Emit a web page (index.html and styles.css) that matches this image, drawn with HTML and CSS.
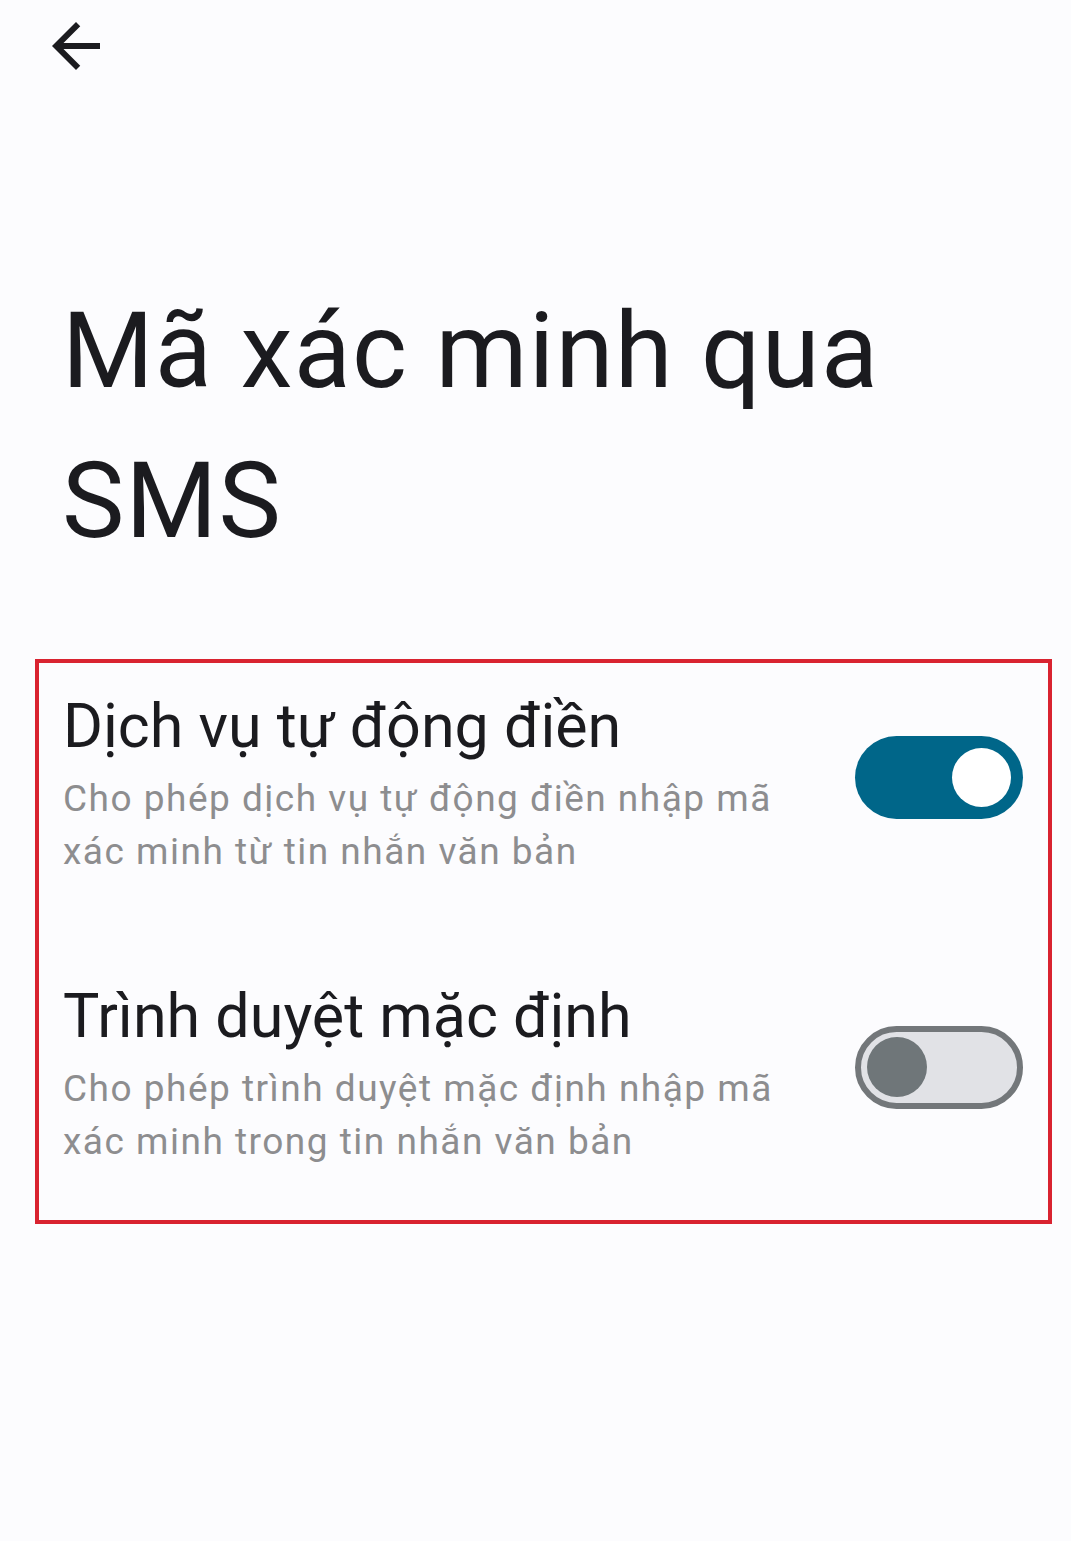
FILE: index.html
```html
<!DOCTYPE html>
<html lang="vi">

<head>
    <meta charset="UTF-8">
    <meta name="viewport" content="width=device-width, initial-scale=1.0">
    <title>Mã xác minh qua SMS</title>
    <link rel="stylesheet" href="styles.css">
</head>

<body>
    <div class="top-bar">
        <button class="back-btn" aria-label="Quay lại">
            <svg viewBox="0 0 24 24" width="72" height="72">
                <path d="M20 11H7.83l5.59-5.59L12 4l-8 8 8 8 1.41-1.41L7.83 13H20v-2z" fill="#1b1b1f" />
            </svg>
        </button>
    </div>
    <h1 class="page-title">Mã xác minh qua SMS</h1>
    <div class="settings">
        <div class="setting">
            <div class="setting-text">
                <div class="setting-title">Dịch vụ tự động điền</div>
                <div class="setting-desc">Cho phép dịch vụ tự động điền nhập mã xác minh từ tin nhắn văn bản</div>
            </div>
            <div class="switch on">
                <div class="knob"></div>
            </div>
        </div>
        <div class="setting">
            <div class="setting-text">
                <div class="setting-title">Trình duyệt mặc định</div>
                <div class="setting-desc">Cho phép trình duyệt mặc định nhập mã xác minh trong tin nhắn văn bản</div>
            </div>
            <div class="switch off">
                <div class="knob"></div>
            </div>
        </div>
    </div>
</body>

</html>
```

FILE: styles.css
```css
body {
    margin: 0;
    background-color: #fcfcfe;
    font-family: Roboto, "Noto Sans", sans-serif;
    color: #1b1b1f;
}

.top-bar {
    padding: 10px 40px 0;
    height: 72px;
}

.back-btn {
    border: none;
    background: none;
    padding: 0;
    width: 72px;
    height: 72px;
    display: block;
}

.back-btn svg {
    display: block;
}

.page-title {
    margin: 195px 150px 0 62px;
    font-size: 105px;
    font-weight: 400;
    line-height: 150px;
    letter-spacing: 1.2px;
}

.settings {
    margin: 82px 0 0 35px;
    width: 1017px;
    box-sizing: border-box;
    border: 4px solid #d92330;
    padding: 27px 25px 52px 24px;
    display: flex;
    flex-direction: column;
    gap: 102px;
}

.setting {
    display: flex;
    align-items: center;
    justify-content: space-between;
}

.setting-text {
    width: 750px;
}

.setting-title {
    font-size: 61px;
    line-height: 72px;
    margin-bottom: 10px;
}

.setting-desc {
    font-size: 37px;
    line-height: 53px;
    letter-spacing: 1.5px;
    color: #8d8d8f;
}

/* switch */
.switch {
    width: 168px;
    height: 83px;
    margin-bottom: 14px;
    border-radius: 42px;
    box-sizing: border-box;
    display: flex;
    align-items: center;
    flex-shrink: 0;
}

.switch.on {
    background-color: #006689;
    justify-content: flex-end;
    padding-right: 12px;
}

.switch.on .knob {
    width: 59px;
    height: 59px;
    background-color: #fff;
}

.switch.off {
    background-color: #e1e2e6;
    border: 6px solid #73777a;
    padding-left: 6px;
}

.switch.off .knob {
    width: 60px;
    height: 60px;
    background-color: #6f7679;
}

.knob {
    border-radius: 50%;
}
```
